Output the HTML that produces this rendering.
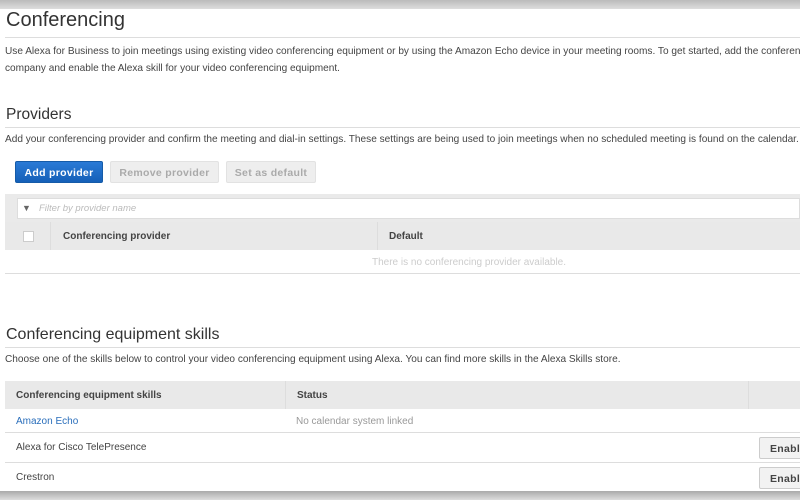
<!DOCTYPE html><html style="overflow:hidden"><head><style>
*{margin:0;padding:0;box-sizing:border-box}
body{width:800px;height:500px;overflow:hidden;background:#fff;font-family:"Liberation Sans",Arial,sans-serif;position:relative;color:#444}
.a{position:absolute;white-space:nowrap}
.h{font-size:10.1px;color:#444}
.line{position:absolute;left:5px;right:0;height:1px;background:#ddd}
.btn{position:absolute;height:22px;border-radius:2px;font-size:10.5px;font-weight:bold;text-align:center;line-height:22px;letter-spacing:.3px}
.g{background:#eee;border:1px solid #e2e2e2;color:#aaa}
.th{position:absolute;background:#e9e9e9;font-size:10px;font-weight:bold;color:#444}
.clip{position:absolute;left:0;top:0;width:800px;height:500px;overflow:hidden}
</style></head><body><div class="clip">
<div class="a" style="left:0;top:0;width:800px;height:9px;background:linear-gradient(#bbb,#ddd)"></div>
<div class="a" style="left:6px;top:9px;font-size:20px;color:#333">Conferencing</div>
<div class="line" style="top:37px"></div>
<div class="a h" style="left:5px;top:46px">Use Alexa for Business to join meetings using existing video conferencing equipment or by using the Amazon Echo device in your meeting rooms. To get started, add the conferencing provider used by your</div>
<div class="a h" style="left:5px;top:63px">company and enable the Alexa skill for your video conferencing equipment.</div>
<div class="a" style="left:6px;top:106px;font-size:15.5px;color:#333">Providers</div>
<div class="line" style="top:127px"></div>
<div class="a h" style="left:5px;top:134px">Add your conferencing provider and confirm the meeting and dial-in settings. These settings are being used to join meetings when no scheduled meeting is found on the calendar.</div>
<div class="btn" style="left:15px;top:161px;width:88px;background:linear-gradient(#2a7ad6,#1560b8);border:1px solid #155ba8;color:#fff">Add provider</div>
<div class="btn g" style="left:110px;top:161px;width:109px">Remove provider</div>
<div class="btn g" style="left:226px;top:161px;width:90px">Set as default</div>
<div class="a" style="left:5px;top:194px;width:795px;height:28px;background:#eaeaea"></div>
<div class="a" style="left:17px;top:198px;width:783px;height:21px;background:#fff;border:1px solid #ddd"></div>
<div class="a" style="left:22px;top:203px;font-size:9px;color:#666">▼</div>
<div class="a" style="left:39px;top:203px;font-size:9.5px;font-style:italic;color:#bbb">Filter by provider name</div>
<div class="th" style="left:5px;top:222px;width:795px;height:28px"></div>
<div class="a" style="left:50px;top:222px;width:1px;height:28px;background:#ddd"></div>
<div class="a" style="left:377px;top:222px;width:1px;height:28px;background:#ddd"></div>
<div class="a" style="left:23px;top:231px;width:11px;height:11px;background:#fff;border:1px solid #ccc"></div>
<div class="a" style="left:63px;top:231px;font-size:10px;font-weight:bold;color:#444">Conferencing provider</div>
<div class="a" style="left:389px;top:231px;font-size:10px;font-weight:bold;color:#444">Default</div>
<div class="a" style="left:372px;top:257px;font-size:10px;color:#ccc">There is no conferencing provider available.</div>
<div class="line" style="top:273px"></div>
<div class="a" style="left:6px;top:326px;font-size:16px;color:#333">Conferencing equipment skills</div>
<div class="line" style="top:347px"></div>
<div class="a h" style="left:5px;top:354px">Choose one of the skills below to control your video conferencing equipment using Alexa. You can find more skills in the Alexa Skills store.</div>
<div class="th" style="left:5px;top:381px;width:795px;height:28px"></div>
<div class="a" style="left:285px;top:381px;width:1px;height:28px;background:#ddd"></div>
<div class="a" style="left:748px;top:381px;width:1px;height:28px;background:#ddd"></div>
<div class="a" style="left:16px;top:390px;font-size:10px;font-weight:bold;color:#444">Conferencing equipment skills</div>
<div class="a" style="left:297px;top:390px;font-size:10px;font-weight:bold;color:#444">Status</div>
<div class="a" style="left:16px;top:416px;font-size:10px;color:#2a6ebb">Amazon Echo</div>
<div class="a" style="left:296px;top:416px;font-size:10px;color:#999">No calendar system linked</div>
<div class="line" style="top:432px"></div>
<div class="a" style="left:16px;top:442px;font-size:10px;color:#444">Alexa for Cisco TelePresence</div>
<div class="btn" style="left:759px;top:437px;width:50px;height:22px;background:#f2f2f2;border:1px solid #ccc;color:#444;text-align:left;padding-left:10px">Enable</div>
<div class="line" style="top:462px"></div>
<div class="a" style="left:16px;top:472px;font-size:10px;color:#444">Crestron</div>
<div class="btn" style="left:759px;top:467px;width:50px;height:22px;background:#f2f2f2;border:1px solid #ccc;color:#444;text-align:left;padding-left:10px">Enable</div>
<div class="a" style="left:0;top:491px;width:800px;height:9px;background:linear-gradient(#aaa,#ddd)"></div>
</div></body></html>
